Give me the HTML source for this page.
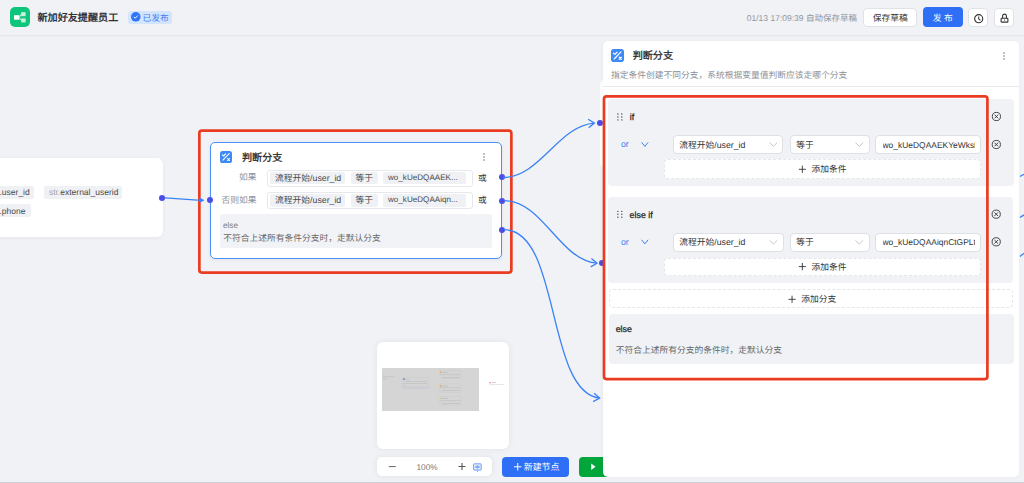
<!DOCTYPE html>
<html lang="zh-CN"><head><meta charset="utf-8">
<style>
*{box-sizing:border-box;margin:0;padding:0}
html,body{width:1024px;height:483px;overflow:hidden}
body{position:relative;background:#f0f2f5;font-family:"Liberation Sans",sans-serif;color:#1f2329;text-rendering:geometricPrecision}
.a{position:absolute}
.t{position:absolute;white-space:nowrap;line-height:20px;font-size:8.75px}
.chip{position:absolute;background:#f0f1f4;border-radius:2px}
.btn{position:absolute;background:#fff;border-radius:4px;border:1px solid #dfe2e7}
.dot{position:absolute;width:6px;height:6px;border-radius:50%;background:#4a4de6}
.gbox{position:absolute;background:#f0f2f5;border-radius:4px}
.sel{position:absolute;background:#fff;border:1px solid #dde0e5;border-radius:4px}
.dash{position:absolute;background:#fff;border:1px dashed #e4e6ea;border-radius:4px}
svg{position:absolute;overflow:visible}
</style></head><body>

<!-- header -->
<div class="a" style="left:0;top:35px;width:1024px;height:1px;background:#e5e7eb"></div>
<div class="a" style="left:0;top:36px;width:1024px;height:1px;background:#eceef1"></div>
<svg style="left:10px;top:7px" width="20" height="20" viewBox="0 0 20 20">
<rect x="0" y="0" width="20" height="20" rx="5" fill="#0ec67b"/>
<rect x="4" y="8.2" width="5.4" height="4.5" fill="#fff"/>
<rect x="11.2" y="5.2" width="4.4" height="4" fill="#c9f2de"/>
<rect x="11.2" y="11.4" width="4.4" height="4" fill="#c9f2de"/>
<path d="M9.4 10.4 L11.2 7.2 M9.4 10.4 L11.2 13.4" stroke="#c9f2de" stroke-width="1"/>
</svg>
<div class="t" style="left:37.5px;top:9.2px;font-size:10.1px;font-weight:500;color:#1f2329;-webkit-text-stroke:0.3px #1f2329">新加好友提醒员工</div>
<div class="a" style="left:128px;top:10.7px;width:44px;height:13.8px;border-radius:3.5px;background:#d3e4fd"></div>
<svg style="left:131.2px;top:12.3px" width="9.6" height="9.6" viewBox="0 0 10 10">
<circle cx="5" cy="5" r="5" fill="#2f76f6"/>
<path d="M2.9 5.1 L4.4 6.5 L7.2 3.6" fill="none" stroke="#fff" stroke-width="1"/>
</svg>
<div class="t" style="left:142.5px;top:7.85px;color:#3d7ef5">已发布</div>

<div class="t" style="left:746.8px;top:7.8px;font-size:8.5px;color:#8f959e">01/13 17:09:39 自动保存草稿</div>
<div class="btn" style="left:863.2px;top:7.5px;width:54px;height:19.4px"></div>
<div class="t" style="left:863.2px;top:7.65px;width:54px;text-align:center;color:#333">保存草稿</div>
<div class="a" style="left:922.7px;top:7.4px;width:40.1px;height:19.6px;border-radius:4px;background:#2e6ff6"></div>
<div class="t" style="left:922.7px;top:7.85px;width:40.1px;text-align:center;color:#fff">发 布</div>
<div class="btn" style="left:967.9px;top:7.7px;width:20px;height:19px"></div>
<svg style="left:973.6px;top:13.5px" width="9.4" height="9.4" viewBox="0 0 10 10">
<circle cx="5" cy="5" r="4.3" fill="none" stroke="#333" stroke-width="1.2"/>
<path d="M5 2.6 L5 5.2 L6.8 6.8" fill="none" stroke="#333" stroke-width="1.1"/>
</svg>
<div class="btn" style="left:994px;top:7.7px;width:20px;height:19px"></div>
<svg style="left:999.5px;top:13px" width="9" height="10" viewBox="0 0 9 10">
<path d="M2.6 5.2 L2.6 3.0 A1.9 1.9 0 0 1 6.4 3.0 L6.4 5.2" fill="none" stroke="#333" stroke-width="1.1"/>
<rect x="1.1" y="5.2" width="6.8" height="3.9" rx="0.7" fill="none" stroke="#333" stroke-width="1.1"/>
<path d="M4.5 6.5 L4.5 7.6" stroke="#333" stroke-width="0.9"/>
</svg>

<!-- left node -->
<div class="a" style="left:-10px;top:158.2px;width:172.8px;height:79.3px;border-radius:6px;background:#fff;box-shadow:0 1px 4px rgba(0,0,0,0.05)"></div>
<div class="chip" style="left:-5px;top:185.7px;width:38.6px;height:13.1px"></div>
<div class="t" style="left:-0.5px;top:182.3px;font-size:8.5px;color:#4a4a4a">.user_id</div>
<div class="chip" style="left:44.4px;top:185.7px;width:78.1px;height:13.1px"></div>
<div class="t" style="left:48.9px;top:182.3px;font-size:8.5px;color:#4a4a4a"><span style="color:#a3a3a3">str.</span>external_userid</div>
<div class="chip" style="left:-5px;top:204.1px;width:35.8px;height:13.4px"></div>
<div class="t" style="left:-0.5px;top:200.8px;font-size:8.5px;color:#4a4a4a">.phone</div>
<div class="dot" style="left:159.4px;top:194.8px"></div>

<!-- middle node -->
<div class="a" style="left:209.7px;top:142px;width:292.2px;height:116.7px;border:1px solid #4a8ff7;border-radius:5px;background:#fff;box-shadow:0 1px 4px rgba(0,0,0,0.06)"></div>
<svg style="left:219.8px;top:150.9px" width="12" height="12" viewBox="0 0 12 12">
<rect width="12" height="12" rx="2.6" fill="#3d8af7"/>
<path d="M2.9 9.2 L9.2 2.6" stroke="#fff" stroke-width="1.1" fill="none" stroke-linecap="round"/>
<path d="M2.3 3.9 L3.6 5.0 L5.6 2.9" stroke="#fff" stroke-width="1.1" fill="none" stroke-linecap="round" stroke-linejoin="round"/>
<path d="M7.6 7.6 L9.5 9.5 M9.5 7.6 L7.6 9.5" stroke="#fff" stroke-width="1.1" fill="none" stroke-linecap="round"/>
</svg>
<div class="t" style="left:242px;top:148.7px;font-size:10.1px;font-weight:500;color:#262626;-webkit-text-stroke:0.3px #262626">判断分支</div>
<svg style="left:483px;top:153px" width="2" height="8" viewBox="0 0 2 8">
<circle cx="1" cy="1" r="0.7" fill="#555"/><circle cx="1" cy="4" r="0.7" fill="#555"/><circle cx="1" cy="7" r="0.7" fill="#555"/>
</svg>
<div class="t" style="left:219.4px;top:166.9px;width:37px;text-align:right;color:#8a8f99">如果</div>
<div class="t" style="left:199.4px;top:189.6px;width:57px;text-align:right;color:#8a8f99">否则如果</div>
<div class="a" style="left:267.1px;top:169.5px;width:206.2px;height:17.2px;border:1px solid #e6e8ec;border-radius:3px"></div>
<div class="a" style="left:267.1px;top:192.2px;width:206.2px;height:16.4px;border:1px solid #e6e8ec;border-radius:3px"></div>
<div class="chip" style="left:270.1px;top:171.8px;width:75.4px;height:12.5px"></div>
<div class="chip" style="left:350.7px;top:171.8px;width:27.2px;height:12.5px"></div>
<div class="chip" style="left:383.2px;top:171.8px;width:82.5px;height:12.5px"></div>
<div class="t" style="left:275.1px;top:168.3px;color:#4a4a4a">流程开始/user_id</div>
<div class="t" style="left:355.5px;top:168.3px;color:#4a4a4a">等于</div>
<div class="t" style="left:388px;top:168.3px;font-size:8.1px;color:#4a4a4a">wo_kUeDQAAEK...</div>
<div class="chip" style="left:270.1px;top:194.2px;width:75.4px;height:12.5px"></div>
<div class="chip" style="left:350.7px;top:194.2px;width:27.2px;height:12.5px"></div>
<div class="chip" style="left:383.2px;top:194.2px;width:82.5px;height:12.5px"></div>
<div class="t" style="left:275.1px;top:189.5px;color:#4a4a4a">流程开始/user_id</div>
<div class="t" style="left:355.5px;top:189.5px;color:#4a4a4a">等于</div>
<div class="t" style="left:388px;top:189.5px;font-size:8.1px;color:#4a4a4a">wo_kUeDQAAiqn...</div>
<div class="t" style="left:478px;top:168.4px;color:#333">或</div>
<div class="t" style="left:478px;top:190px;color:#333">或</div>
<div class="a" style="left:219.9px;top:214.4px;width:272.3px;height:33.9px;background:#f2f3f6;border-radius:2px"></div>
<div class="t" style="left:223px;top:216.2px;font-size:8.2px;color:#808080">else</div>
<div class="t" style="left:223.2px;top:228.1px;color:#666">不符合上述所有条件分支时，走默认分支</div>
<div class="dot" style="left:498.5px;top:174.4px"></div>
<div class="dot" style="left:498.5px;top:197.6px"></div>
<div class="dot" style="left:498.5px;top:226.7px"></div>
<div class="dot" style="left:206.6px;top:197.3px"></div>
<svg style="left:0;top:0" width="1024" height="483"><rect x="199.35" y="130.65" width="312" height="141.9" rx="2.5" fill="none" stroke="#e93c22" stroke-width="2.7"/></svg>

<!-- canvas card behind panel -->
<div class="a" style="left:600px;top:79px;width:100px;height:89px;border-radius:6px;background:#fff"></div>
<div class="dot" style="left:597px;top:120px"></div>
<div class="dot" style="left:599.3px;top:260.3px"></div>

<!-- edges -->
<svg style="left:0;top:0" width="1024" height="483" viewBox="0 0 1024 483">
<g fill="none" stroke="#3b82f6" stroke-width="1.3">
<path d="M165 197.8 L201 200.3"/>
<path d="M503.0 177.5 C540.1 177.5 558.2 125.5 594.4 123.1"/>
<path d="M588.7 127.7 L594.4 123.1 L588.1 119.3"/>
<path d="M504.0 200.6 C543.0 200.6 559.2 260.2 597.0 263.2"/>
<path d="M590.7 266.9 L597.0 263.2 L591.4 258.5"/>
<path d="M504.0 229.7 C560.8 229.7 545.7 391.7 599.6 398.2"/>
<path d="M593.1 401.6 L599.6 398.2 L594.1 393.3"/>
</g>
<path d="M199.5 197.5 L204.5 200.3 L199.5 203" fill="#3b82f6"/>
<path d="M1020 176.5 Q1022 175 1025 174 M1020 217.5 Q1022 216 1025 214.5 M1020 256.5 Q1022 254.5 1025 253" fill="none" stroke="#3b82f6" stroke-width="1.3"/>
</svg>

<!-- minimap -->
<div class="a" style="left:377.4px;top:342px;width:131.4px;height:107.3px;border-radius:6px;background:#fff;box-shadow:0 0 6px rgba(0,0,0,0.07)"></div>
<div class="a" style="left:382.3px;top:368.2px;width:96.5px;height:42.5px;background:#d5d5d5"></div>
<svg style="left:0;top:0" width="1024" height="483">
<g fill="none" stroke="#cacaca" stroke-width="0.5"><rect x="402" y="377.8" width="27" height="10.5" rx="1"/><rect x="439.6" y="370.5" width="21" height="8" rx="1"/><rect x="439.6" y="383.7" width="21" height="8.6" rx="1"/><rect x="439.6" y="396.3" width="21" height="8.5" rx="1"/></g>
<g fill="#bdbdbd">
<rect x="383" y="374.5" width="1" height="0.6"/><rect x="383" y="376.5" width="12" height="0.6"/><rect x="383" y="378.5" width="4" height="0.6"/>
<rect x="403" y="378.3" width="1.6" height="1.6" fill="#4a8af4"/><rect x="405" y="379" width="4" height="0.7"/>
<rect x="405" y="381" width="22" height="0.6"/><rect x="403" y="383" width="24" height="0.6"/><rect x="403" y="385" width="2" height="0.6"/>
<rect x="403" y="386.3" width="27" height="2" fill="#cbcdd2"/>
<rect x="440" y="371.5" width="1.3" height="1.6" fill="#f0a340"/><rect x="442" y="372" width="6" height="0.8"/><rect x="440" y="374.5" width="20" height="0.6"/><rect x="442" y="377" width="18" height="0.6"/>
<rect x="440" y="385" width="1.3" height="1.6" fill="#f0a340"/><rect x="442" y="385.5" width="6" height="0.8"/><rect x="440" y="387.5" width="20" height="0.6"/><rect x="442" y="390" width="18" height="0.6"/>
<rect x="440.5" y="397.5" width="1.3" height="1.6" fill="#f0c070"/><rect x="442" y="398" width="6" height="0.8"/><rect x="440" y="400.5" width="20" height="0.6"/><rect x="442" y="403" width="18" height="0.6"/>
<rect x="489.5" y="382" width="1.3" height="1.3" fill="#f07070"/><rect x="492" y="382" width="4" height="0.7"/><rect x="489.5" y="384" width="15" height="0.6" fill="#d8d8d8"/>
</g>
</svg>

<!-- zoom bar -->
<div class="a" style="left:377.2px;top:456.9px;width:114.8px;height:19.3px;border-radius:5px;background:#fff;box-shadow:0 0 6px rgba(0,0,0,0.07)"></div>
<svg style="left:0;top:0" width="1024" height="483">
<path d="M388.8 466.6 H395.8" stroke="#666" stroke-width="1"/>
<path d="M458.5 466.5 H465.5 M462 463 V470" stroke="#555" stroke-width="1.1"/>
<rect x="473.6" y="463.8" width="7.6" height="6.2" rx="0.6" fill="#e3edfd" stroke="#4a8cf6" stroke-width="0.8"/>
<path d="M475.2 466.9 Q477.4 464.6 479.6 466.9 Q477.4 469.2 475.2 466.9 Z" fill="none" stroke="#4a8cf6" stroke-width="0.7"/>
<circle cx="477.4" cy="466.9" r="0.7" fill="#4a8cf6"/>
<path d="M476.6 470.8 L477.4 471.6 L478.2 470.8" fill="#4a8cf6" stroke="#4a8cf6" stroke-width="0.6"/>
</svg>
<div class="t" style="left:416.5px;top:456.6px;font-size:8.3px;color:#777">100%</div>

<div class="a" style="left:501.9px;top:457px;width:67.1px;height:19.6px;border-radius:4px;background:#2e6ff6"></div>
<svg style="left:0;top:0" width="1024" height="483">
<path d="M514 466.8 H521.5 M517.75 463 V470.6" stroke="#fff" stroke-width="1"/>
</svg>
<div class="t" style="left:523.8px;top:456.8px;font-size:8.9px;color:#fff">新建节点</div>
<div class="a" style="left:579px;top:457px;width:40px;height:19.6px;border-radius:4px;background:#03a63a"></div>
<svg style="left:0;top:0" width="1024" height="483">
<path d="M591.2 463.5 L595.5 466.8 L591.2 470.1 Z" fill="#fff"/>
</svg>

<!-- right panel -->
<div class="a" style="left:603px;top:40.8px;width:416px;height:436.2px;border-radius:5px;background:#fff;box-shadow:-1px 0 4px rgba(0,0,0,0.04)"></div>
<svg style="left:610.6px;top:48.9px" width="13" height="13" viewBox="0 0 12 12">
<rect width="12" height="12" rx="2.6" fill="#3d8af7"/>
<path d="M2.9 9.2 L9.2 2.6" stroke="#fff" stroke-width="1.1" fill="none" stroke-linecap="round"/>
<path d="M2.3 3.9 L3.6 5.0 L5.6 2.9" stroke="#fff" stroke-width="1.1" fill="none" stroke-linecap="round" stroke-linejoin="round"/>
<path d="M7.6 7.6 L9.5 9.5 M9.5 7.6 L7.6 9.5" stroke="#fff" stroke-width="1.1" fill="none" stroke-linecap="round"/>
</svg>
<div class="t" style="left:632.7px;top:47px;font-size:10.1px;font-weight:500;color:#262626;-webkit-text-stroke:0.3px #262626">判断分支</div>
<svg style="left:1003px;top:51.5px" width="2" height="8" viewBox="0 0 2 8">
<circle cx="1" cy="1" r="0.7" fill="#555"/><circle cx="1" cy="4" r="0.7" fill="#555"/><circle cx="1" cy="7" r="0.7" fill="#555"/>
</svg>
<div class="t" style="left:611px;top:65.1px;color:#8a8f99">指定条件创建不同分支，系统根据变量值判断应该走哪个分支</div>
<div class="a" style="left:603px;top:85.5px;width:416px;height:1px;background:#e8eaee"></div>

<!-- if -->
<div class="gbox" style="left:608px;top:99.3px;width:405.5px;height:87px"></div>
<div class="t" style="left:629.7px;top:107.2px;font-size:8.9px;font-weight:400;color:#262626;-webkit-text-stroke:0.25px #262626">if</div>
<div class="t" style="left:620.9px;top:134.2px;font-size:8.8px;color:#3b82f6">or</div>
<div class="sel" style="left:672.8px;top:134.7px;width:110.6px;height:19.3px"></div>
<div class="t" style="left:679.3px;top:134.8px;color:#333">流程开始/user_id</div>
<div class="sel" style="left:789.6px;top:134.7px;width:80.4px;height:19.3px"></div>
<div class="t" style="left:796.2px;top:134.8px;color:#333">等于</div>
<div class="sel" style="left:875.3px;top:134.7px;width:106px;height:19.3px"></div>
<div class="t" style="left:882.5px;top:134.8px;width:92px;overflow:hidden;font-size:8.45px;color:#333">wo_kUeDQAAEKYeWksMxxxx</div>
<div class="dash" style="left:663.9px;top:159.3px;width:317px;height:19.8px"></div>
<div class="t" style="left:811.5px;top:159.2px;color:#333">添加条件</div>

<!-- else if -->
<div class="gbox" style="left:608.3px;top:197.2px;width:405.2px;height:85.7px"></div>
<div class="t" style="left:629.6px;top:204.6px;font-size:8.9px;font-weight:400;color:#262626;-webkit-text-stroke:0.25px #262626">else if</div>
<div class="t" style="left:620.9px;top:231.7px;font-size:8.8px;color:#3b82f6">or</div>
<div class="sel" style="left:672.5px;top:232.8px;width:111.1px;height:18.8px"></div>
<div class="t" style="left:679.3px;top:232.2px;color:#333">流程开始/user_id</div>
<div class="sel" style="left:789.6px;top:232.8px;width:80.4px;height:18.8px"></div>
<div class="t" style="left:796.2px;top:232.2px;color:#333">等于</div>
<div class="sel" style="left:875.3px;top:232.8px;width:106px;height:18.8px"></div>
<div class="t" style="left:882.5px;top:232.2px;width:92px;overflow:hidden;font-size:8.45px;color:#333">wo_kUeDQAAiqnCtGPLtxxxx</div>
<div class="dash" style="left:663.9px;top:257.6px;width:317px;height:18.7px"></div>
<div class="t" style="left:811.5px;top:256.5px;color:#333">添加条件</div>

<div class="dash" style="left:608.7px;top:289.1px;width:404.8px;height:19.4px"></div>
<div class="t" style="left:801.2px;top:289.3px;color:#333">添加分支</div>

<div class="gbox" style="left:608.5px;top:314.2px;width:405px;height:49.7px"></div>
<div class="t" style="left:615.7px;top:318.9px;font-size:8.9px;font-weight:400;color:#262626;-webkit-text-stroke:0.25px #262626">else</div>
<div class="t" style="left:615.7px;top:340px;color:#666">不符合上述所有分支的条件时，走默认分支</div>

<svg style="left:0;top:0" width="1024" height="483">
<g fill="#4a4a4a"><circle cx="617.9" cy="114.0" r="0.7"/><circle cx="621.8" cy="114.0" r="0.7"/><circle cx="617.9" cy="117.0" r="0.7"/><circle cx="621.8" cy="117.0" r="0.7"/><circle cx="617.9" cy="119.9" r="0.7"/><circle cx="621.8" cy="119.9" r="0.7"/><circle cx="617.9" cy="211.4" r="0.7"/><circle cx="621.8" cy="211.4" r="0.7"/><circle cx="617.9" cy="214.3" r="0.7"/><circle cx="621.8" cy="214.3" r="0.7"/><circle cx="617.9" cy="217.3" r="0.7"/><circle cx="621.8" cy="217.3" r="0.7"/></g>
<g fill="none" stroke="#3b82f6" stroke-width="1">
<path d="M641.6 142.3 L644.85 146.4 L648.1 142.3"/>
<path d="M641.6 239.8 L644.85 243.9 L648.1 239.8"/>
</g>
<g fill="none" stroke="#b5b8be" stroke-width="0.8">
<path d="M769.5 142.5 L773.4 146.3 L777.3 142.5"/>
<path d="M855.4 142.5 L859.3 146.3 L863.2 142.5"/>
<path d="M769.5 240.3 L773.4 244.1 L777.3 240.3"/>
<path d="M855.4 240.3 L859.3 244.1 L863.2 240.3"/>
</g>
<g fill="none" stroke="#333" stroke-width="0.9">
<circle cx="996.4" cy="116.5" r="4.1"/><path d="M994.6 114.7 L998.2 118.3 M998.2 114.7 L994.6 118.3"/>
<circle cx="996.3" cy="144.5" r="4.1"/><path d="M994.5 142.7 L998.1 146.3 M998.1 142.7 L994.5 146.3"/>
<circle cx="996.2" cy="214.2" r="4.1"/><path d="M994.4 212.4 L998 216 M998 212.4 L994.4 216"/>
<circle cx="996.2" cy="241.8" r="4.1"/><path d="M994.4 240 L998 243.6 M998 240 L994.4 243.6"/>
</g>
<g stroke="#333" stroke-width="0.9">
<path d="M798.8 169.3 H805.9 M802.35 165.7 V172.9"/>
<path d="M798.8 266.6 H805.9 M802.35 263 V270.2"/>
<path d="M788.5 299.3 H795.6 M792.05 295.7 V302.9"/>
</g>
</svg>
<svg style="left:0;top:0" width="1024" height="483"><rect x="604" y="96.3" width="383.4" height="282.8" rx="2.5" fill="none" stroke="#e93c22" stroke-width="2.7"/></svg>

<div class="a" style="left:0;top:482px;width:1024px;height:1px;background:#cdd0d5"></div>
</body></html>
